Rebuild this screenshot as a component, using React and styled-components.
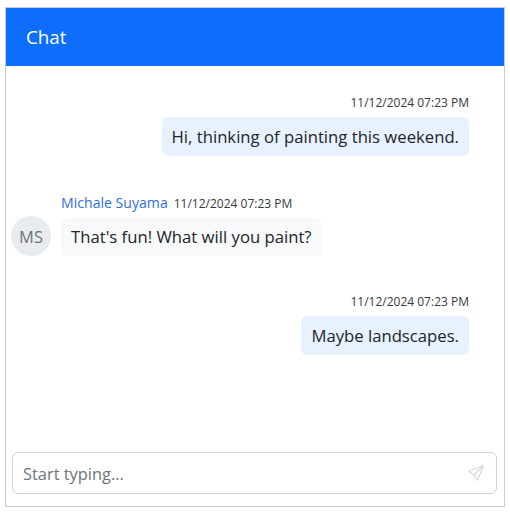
import React from "react";
import styled, { createGlobalStyle } from "styled-components";
import { BsSend } from "react-icons/bs";

const Global = createGlobalStyle`
  * { box-sizing: border-box; }
  body {
    margin: 0;
    background: #fff;
    font-family: "Open Sans", "Noto Sans", sans-serif;
    color: #212529;
  }
`;

const Card = styled.div`
  width: 500px;
  height: 500px;
  margin: 7px 0 0 5px;
  border: 1px solid #ccc;
  display: flex;
  flex-direction: column;
`;

const Header = styled.div`
  height: 58px;
  flex-shrink: 0;
  background: #0d6efd;
  color: #fff;
  font-size: 18.8px;
  padding-left: 20px;
  display: flex;
  align-items: center;
`;

const Messages = styled.div`
  flex: 1;
  padding: 28px 35px 0 5px;
  display: flex;
  flex-direction: column;
  gap: 37px;
`;

const Row = styled.div`
  display: flex;
  justify-content: ${(p) => (p.$mine ? "flex-end" : "flex-start")};
  align-items: flex-end;
  gap: 10px;
`;

const Stack = styled.div`
  display: flex;
  flex-direction: column;
  align-items: ${(p) => (p.$mine ? "flex-end" : "flex-start")};
  gap: 6px;
`;

const Meta = styled.div`
  display: flex;
  align-items: baseline;
  gap: 6px;
  line-height: 17px;
`;

const Name = styled.span`
  font-size: 14.1px;
  line-height: 19px;
  color: #2f6fde;
`;

const Time = styled.span`
  font-size: 12px;
  color: #343a40;
`;

const Bubble = styled.div`
  height: 38.5px;
  padding: 0 10px;
  border-radius: 6px;
  font-size: 16.7px;
  display: flex;
  align-items: center;
  background: ${(p) => (p.$mine ? "#e7f1ff" : "#f8f9fa")};
`;

const Avatar = styled.div`
  width: 40px;
  height: 40px;
  border-radius: 50%;
  background: #e9ecef;
  color: #6c757d;
  font-size: 16.5px;
  display: flex;
  align-items: center;
  justify-content: center;
`;

const Composer = styled.div`
  padding: 0 7px 12px 6px;
`;

const InputBox = styled.div`
  height: 42px;
  border: 1px solid #ced4da;
  border-radius: 6px;
  padding: 0 12px 0 10px;
  display: flex;
  align-items: center;
  justify-content: space-between;
  color: #6c757d;
  font-size: 16.4px;
  svg {
    width: 16px;
    height: 16px;
    color: #ced4da;
  }
`;

export default function App() {
  return (
    <>
      <Global />
      <Card>
        <Header>Chat</Header>
        <Messages>
          <Row $mine>
            <Stack $mine>
              <Meta>
                <Time>11/12/2024 07:23 PM</Time>
              </Meta>
              <Bubble $mine>Hi, thinking of painting this weekend.</Bubble>
            </Stack>
          </Row>
          <Row>
            <Avatar>MS</Avatar>
            <Stack>
              <Meta>
                <Name>Michale Suyama</Name>
                <Time>11/12/2024 07:23 PM</Time>
              </Meta>
              <Bubble>That's fun! What will you paint?</Bubble>
            </Stack>
          </Row>
          <Row $mine>
            <Stack $mine>
              <Meta>
                <Time>11/12/2024 07:23 PM</Time>
              </Meta>
              <Bubble $mine>Maybe landscapes.</Bubble>
            </Stack>
          </Row>
        </Messages>
        <Composer>
          <InputBox>
            Start typing...
            <BsSend />
          </InputBox>
        </Composer>
      </Card>
    </>
  );
}
